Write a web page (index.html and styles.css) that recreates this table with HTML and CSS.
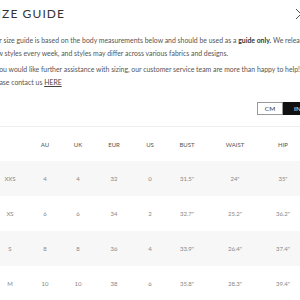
FILE: index.html
```html
<!DOCTYPE html>
<html lang="en">
<head>
    <meta charset="UTF-8">
    <meta name="viewport" content="width=device-width, initial-scale=1.0">
    <title>Size Guide</title>
    <link rel="stylesheet" href="styles.css">
</head>
<body>
    <div class="sheet">
        <div class="sheet-head">
            <h2 class="title">SIZE GUIDE</h2>
            <button class="close" aria-label="Close">
                <svg width="12" height="12" viewBox="0 0 12 12"><path d="M1 1L11 11M11 1L1 11" stroke="#555" stroke-width="1" fill="none"/></svg>
            </button>
        </div>

        <p class="intro">Our size guide is based on the body measurements below and should be used as a <strong>guide only.</strong> We release new styles every week, and styles may differ across various fabrics and designs.</p>
        <p class="intro">If you would like further assistance with sizing, our customer service team are more than happy to help!<br>Please contact us <a href="#">HERE</a></p>

        <div class="units">
            <span class="unit">CM</span>
            <span class="unit active">IN</span>
        </div>

        <div class="chart">
            <div class="chart-row chart-head">
                <span></span><span>AU</span><span>UK</span><span>EUR</span><span>US</span><span>BUST</span><span>WAIST</span><span>HIP</span>
            </div>
            <div class="chart-row alt">
                <span>XXS</span><span>4</span><span>4</span><span>32</span><span>0</span><span>31.5"</span><span>24"</span><span>35"</span>
            </div>
            <div class="chart-row">
                <span>XS</span><span>6</span><span>6</span><span>34</span><span>2</span><span>32.7"</span><span>25.2"</span><span>36.2"</span>
            </div>
            <div class="chart-row alt">
                <span>S</span><span>8</span><span>8</span><span>36</span><span>4</span><span>33.9"</span><span>26.4"</span><span>37.4"</span>
            </div>
            <div class="chart-row">
                <span>M</span><span>10</span><span>10</span><span>38</span><span>6</span><span>35.8"</span><span>28.3"</span><span>39.4"</span>
            </div>
        </div>
    </div>
</body>
</html>
```

FILE: styles.css
```css
body {
    margin: 0;
    font-family: 'Lato', 'Open Sans', sans-serif;
    background-color: #fff;
    color: #333;
    overflow: hidden;
}
.sheet {
    width: 322px;
    margin-left: -10px;
    padding-top: 6px;
}
.sheet-head {
    display: flex;
    justify-content: space-between;
    align-items: center;
    height: 16px;
}
.title {
    margin: 0;
    font-size: 12px;
    font-weight: 400;
    letter-spacing: 1.1px;
    line-height: 16px;
    color: #333;
}
.close {
    width: 12px;
    height: 12px;
    margin-right: 5px;
    padding: 0;
    border: none;
    background: none;
    display: flex;
}
.intro {
    margin: 0 0 3px;
    font-size: 6.9px;
    line-height: 13px;
    color: #555;
}
.sheet-head + .intro {
    margin-top: 12px;
}
.intro strong {
    color: #333;
}
.intro a {
    color: #444;
}
.units {
    display: flex;
    justify-content: flex-end;
    margin-top: 13px;
}
.unit {
    box-sizing: border-box;
    width: 26px;
    height: 13px;
    display: flex;
    align-items: center;
    justify-content: center;
    font-size: 6.5px;
    color: #333;
    border: 1px solid #999;
}
.unit.active {
    width: 29px;
    background-color: #111;
    border-color: #111;
    color: #fff;
}
.chart {
    margin-top: 11px;
    border-top: 1px solid #eee;
}
.chart-row {
    display: grid;
    grid-template-columns: 40px 30px 36px 36px 36px 38px 58px 38px;
    height: 35px;
    align-items: center;
    text-align: center;
    font-size: 6px;
    color: #888;
}
.chart-head {
    height: 34px;
    color: #555;
}
.chart-row.alt {
    background-color: #f7f7f7;
}
```
